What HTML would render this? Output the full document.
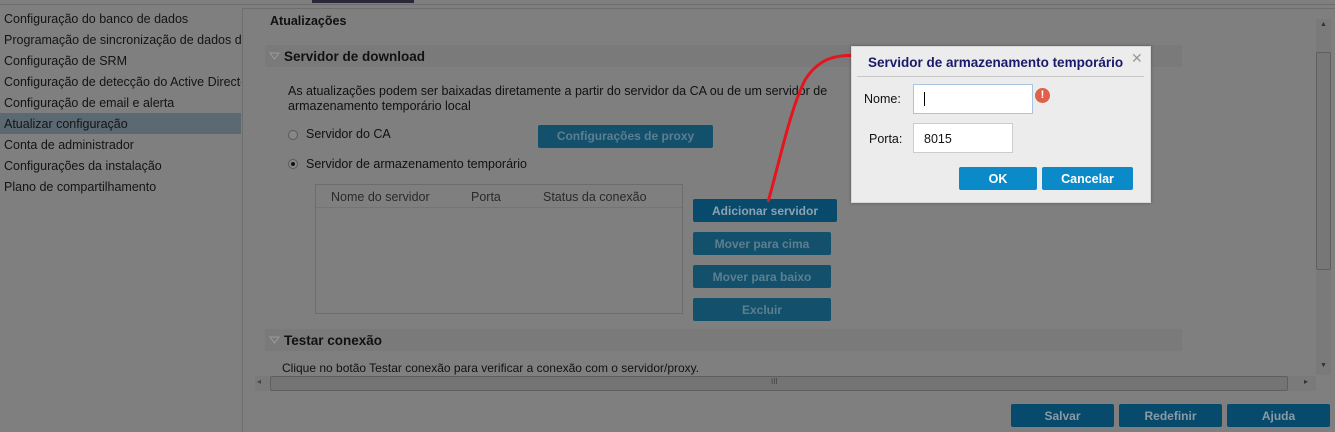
<!DOCTYPE html>
<html><head><meta charset="utf-8"><style>
*{box-sizing:border-box;margin:0;padding:0}
body{width:1335px;height:432px;overflow:hidden;background:#7f7f7f;font-family:"Liberation Sans",Arial,sans-serif;font-size:12px;color:#111;position:relative}
.a{position:absolute}
.nav{position:absolute;left:0;top:0;width:241px;height:432px;overflow:hidden}
.nav div{position:absolute;left:4px;font-size:12.5px;color:#141414;white-space:nowrap}
.btn{position:absolute;background:#13506b;color:#5d7f90;font-weight:bold;text-align:center;font-size:12px;border-radius:2px}
.btn2{background:#074a6c;color:#8a9ba6}
.sec{position:absolute;left:265px;width:917px;height:22px;background:#7a7a7a}
.sec span{position:absolute;left:19px;top:4px;font-weight:bold;font-size:13.5px;color:#111}
.sec svg{position:absolute;left:4px;top:7px}
.rad{position:absolute;width:10px;height:10px;border-radius:50%;border:1px solid #5a5a5a;background:#878787}
</style></head><body>
<div class="a" style="left:0;top:4px;width:1335px;height:1px;background:#6c6c6c"></div>
<div class="a" style="left:312px;top:0;width:102px;height:3px;background:#2a2838"></div>
<div class="a" style="left:242px;top:8px;width:1093px;height:1px;background:#6e6e6e"></div>
<div class="a" style="left:242px;top:8px;width:1px;height:424px;background:#6e6e6e"></div>
<div class="nav">
<div style="top:12px">Configuração do banco de dados</div>
<div style="top:33px">Programação de sincronização de dados d</div>
<div style="top:54px">Configuração de SRM</div>
<div style="top:75px">Configuração de detecção do Active Directo</div>
<div style="top:96px">Configuração de email e alerta</div>
<div class="a" style="left:0;top:113px;width:241px;height:21px;background:#5b6a72"></div>
<div style="top:117px">Atualizar configuração</div>
<div style="top:138px">Conta de administrador</div>
<div style="top:159px">Configurações da instalação</div>
<div style="top:180px">Plano de compartilhamento</div>
</div>
<div class="a" style="left:270px;top:14px;font-weight:bold;font-size:12.5px">Atualizações</div>
<div class="sec" style="top:45px"><svg width="11" height="8"><path d="M1 1 L10 1 L5.5 7 Z" fill="none" stroke="#9a9a9a" stroke-width="1"/></svg><span>Servidor de download</span></div>
<div class="a" style="left:288px;top:84px;font-size:12.5px;line-height:15px">As atualizações podem ser baixadas diretamente a partir do servidor da CA ou de um servidor de<br>armazenamento temporário local</div>
<div class="rad" style="left:288px;top:130px"></div>
<div class="a" style="left:306px;top:127px;font-size:12.5px">Servidor do CA</div>
<div class="rad" style="left:288px;top:159px"><div style="position:absolute;left:2px;top:2px;width:4px;height:4px;border-radius:50%;background:#111"></div></div>
<div class="a" style="left:306px;top:157px;font-size:12.5px">Servidor de armazenamento temporário</div>
<div class="btn" style="left:538px;top:125px;width:175px;height:23px;line-height:23px">Configurações de proxy</div>
<div class="a" style="left:315px;top:184px;width:368px;height:130px;border:1px solid #6c6c6c"></div>
<div class="a" style="left:316px;top:207px;width:366px;height:1px;background:#747474"></div>
<div class="a" style="left:331px;top:190px;font-size:12.5px;color:#2a2a2a">Nome do servidor</div>
<div class="a" style="left:471px;top:190px;font-size:12.5px;color:#2a2a2a">Porta</div>
<div class="a" style="left:543px;top:190px;font-size:12.5px;color:#2a2a2a">Status da conexão</div>
<div class="btn btn2" style="left:693px;top:199px;width:144px;height:23px;line-height:24px;color:#8fa2ad">Adicionar servidor</div>
<div class="btn" style="left:693px;top:232px;width:138px;height:23px;line-height:24px">Mover para cima</div>
<div class="btn" style="left:693px;top:265px;width:138px;height:23px;line-height:24px">Mover para baixo</div>
<div class="btn" style="left:693px;top:298px;width:138px;height:23px;line-height:24px">Excluir</div>
<div class="sec" style="top:329px"><svg width="11" height="8"><path d="M1 1 L10 1 L5.5 7 Z" fill="none" stroke="#9a9a9a" stroke-width="1"/></svg><span>Testar conexão</span></div>
<div class="a" style="left:282px;top:361px;font-size:12px">Clique no botão Testar conexão para verificar a conexão com o servidor/proxy.</div>
<div class="a" style="left:1316px;top:19px;width:15px;height:356px;background:#7a7a7a"></div>
<div class="a" style="left:1316px;top:52px;width:15px;height:218px;background:#777;border:1px solid #5f5f5f;border-radius:2px"></div>
<div class="a" style="left:1320px;top:21px;font-size:7px;color:#333">▲</div>
<div class="a" style="left:1320px;top:362px;font-size:7px;color:#333">▼</div>
<div class="a" style="left:255px;top:376px;width:1061px;height:15px;background:#7a7a7a"></div>
<div class="a" style="left:270px;top:376px;width:1018px;height:15px;background:#747474;border:1px solid #5f5f5f;border-radius:2px"></div>
<div class="a" style="left:257px;top:377px;font-size:8px;color:#444">◂</div>
<div class="a" style="left:1304px;top:377px;font-size:8px;color:#333">▸</div>
<div class="a" style="left:771px;top:377px;font-size:8px;color:#444">III</div>
<div class="btn btn2" style="left:1011px;top:404px;width:103px;height:23px;line-height:25px">Salvar</div>
<div class="btn btn2" style="left:1119px;top:404px;width:103px;height:23px;line-height:25px">Redefinir</div>
<div class="btn btn2" style="left:1227px;top:404px;width:103px;height:23px;line-height:25px">Ajuda</div>
<svg class="a" style="left:760px;top:50px" width="110" height="160"><path d="M101 6 C80 4 60 6 45 30 C30 60 20 110 8 152" fill="none" stroke="#e5141e" stroke-width="3"/></svg>
<div class="a" style="left:851px;top:46px;width:300px;height:157px;background:#ececec;border:1px solid #d8d8d8;box-shadow:0 0 3px rgba(0,0,0,.3)"></div>
<div class="a" style="left:868px;top:55px;font-size:13.5px;font-weight:bold;color:#1a1a6a">Servidor de armazenamento temporário</div>
<div class="a" style="left:1131px;top:50px;font-size:14px;color:#999">✕</div>
<div class="a" style="left:857px;top:76px;width:287px;height:1px;background:#c8c8c8"></div>
<div class="a" style="left:864px;top:92px;font-size:12.5px">Nome:</div>
<div class="a" style="left:913px;top:84px;width:120px;height:30px;background:#fff;border:1px solid #a9c4e0"></div>
<div class="a" style="left:924px;top:92px;width:1px;height:14px;background:#000"></div>
<div class="a" style="left:1035px;top:88px;width:15px;height:15px;border-radius:50%;background:#e0604a;color:#fff;font-size:11px;font-weight:bold;text-align:center;line-height:15px">!</div>
<div class="a" style="left:869px;top:132px;font-size:12.5px">Porta:</div>
<div class="a" style="left:913px;top:123px;width:100px;height:30px;background:#fff;border:1px solid #ccc"></div>
<div class="a" style="left:924px;top:132px;font-size:12.5px">8015</div>
<div class="btn" style="left:959px;top:167px;width:78px;height:23px;line-height:24px;background:#0b8ac9;color:#fff;font-size:12.5px">OK</div>
<div class="btn" style="left:1042px;top:167px;width:91px;height:23px;line-height:24px;background:#0b8ac9;color:#fff;font-size:12.5px">Cancelar</div>
</body></html>
